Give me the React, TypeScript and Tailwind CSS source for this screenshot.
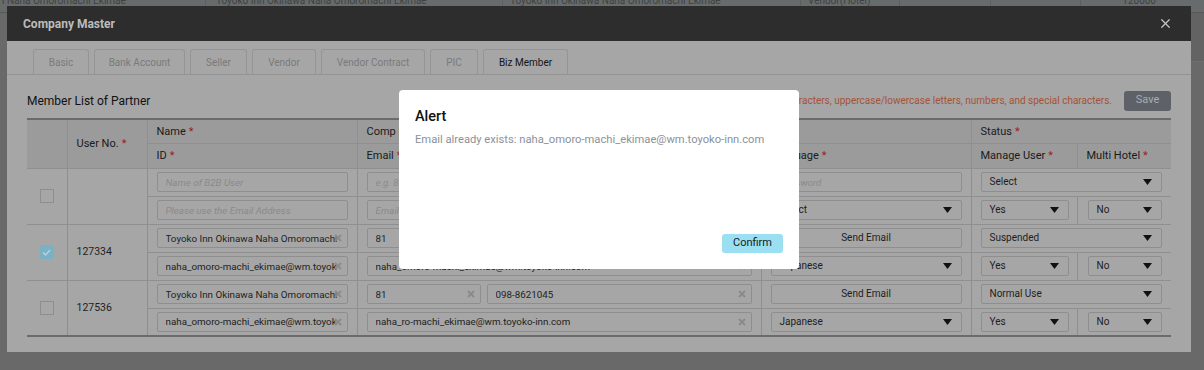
import { Fragment } from 'react';
import { X } from 'lucide-react';

const TABS = [
  { label: 'Basic', w: 'w-[56px]' },
  { label: 'Bank Account', w: 'w-[91px]' },
  { label: 'Seller', w: 'w-[57px]' },
  { label: 'Vendor', w: 'w-[64px]' },
  { label: 'Vendor Contract', w: 'w-[104px]' },
  { label: 'PIC', w: 'w-[48px]' },
  { label: 'Biz Member', w: 'w-[85px]' },
];

const Req = () => <span className="text-[#a11d1d] ml-[3px]">*</span>;

const ClearIcon = () => (
  <svg width="8" height="8" viewBox="0 0 8 8" className="absolute right-[6px] top-1/2 -translate-y-1/2">
    <path d="M1 1 L7 7 M7 1 L1 7" stroke="#8a8a8a" strokeWidth="1.8" />
  </svg>
);

const Field = ({ value, placeholder, clear, className = '' }: { value?: string; placeholder?: string; clear?: boolean; className?: string }) => (
  <div className={`relative h-[20px] ${className}`}>
    <input
      readOnly
      defaultValue={value}
      placeholder={placeholder}
      className="block w-full h-full border border-[#8e8e8e] rounded-[2px] bg-[#a6a6a6] pl-[8px] pr-[10px] text-[9.8px] leading-none text-[#1e1e1e] placeholder:italic placeholder:text-[#8a8a8a] outline-none"
    />
    {clear && <ClearIcon />}
  </div>
);

const Select = ({ value }: { value: string }) => (
  <div className="h-[20px] border border-[#8e8e8e] rounded-[2px] flex items-center justify-between pl-[8px] pr-[9px] text-[10px] leading-none text-[#1e1e1e]">
    <span>{value}</span>
    <svg width="9" height="6" viewBox="0 0 9 6">
      <path d="M0 0 H9 L4.5 6 Z" fill="#111" />
    </svg>
  </div>
);

const Check = ({ checked }: { checked?: boolean }) => (
  <div className={`w-[14px] h-[14px] mx-auto border flex items-center justify-center ${checked ? 'bg-[#7ab1c5] border-[#7ab1c5]' : 'border-[#8e8e8e]'}`}>
    {checked && (
      <svg width="9" height="7" viewBox="0 0 9 7">
        <path d="M1 3.5 L3.5 6 L8 1" stroke="#b9d3dc" strokeWidth="1.3" fill="none" />
      </svg>
    )}
  </div>
);

const SendEmail = () => (
  <div className="h-[20px] border border-[#8e8e8e] rounded-[2px] flex items-center justify-center text-[10px] leading-none text-[#1e1e1e]">
    Send Email
  </div>
);

const td = 'border border-[#8f8f8f] px-[9px] py-0 align-middle leading-none';
const th = 'border border-[#8f8f8f] px-[9px] py-0 align-middle text-left font-normal text-[11px] leading-none text-[#1a1a1a] bg-[#9b9b9b]';

const MEMBERS = [
  { no: '127334', checked: true, email: 'naha_omoro-machi_ekimae@wm.toyoko-inn.com', status: 'Suspended' },
  { no: '127536', checked: false, email: 'naha_ro-machi_ekimae@wm.toyoko-inn.com', status: 'Normal Use' },
];

export default function App() {
  return (
    <div className="relative w-[1204px] h-[370px] overflow-hidden bg-[#696969] font-[Roboto,'Noto_Sans',sans-serif]">
      {/* page behind the modals */}
      <div className="h-[13px] bg-[#676b6b] border-b border-[#585858] flex text-[10px] text-[#3e4242] leading-[10px] overflow-hidden">
        <div className="w-[206px] border-r border-[#5c6060] pl-[2px] -mt-[4px]">i Naha Omoromachi Ekimae</div>
        <div className="w-[297px] border-r border-[#5c6060] pl-[10px] -mt-[4px]">Toyoko Inn Okinawa Naha Omoromachi Ekimae</div>
        <div className="w-[298px] border-r border-[#5c6060] pl-[7px] -mt-[4px]">Toyoko Inn Okinawa Naha Omoromachi Ekimae</div>
        <div className="w-[99px] border-r border-[#5c6060] pl-[7px] -mt-[4px]">Vendor(Hotel)</div>
        <div className="w-[91px] border-r border-[#5c6060]"></div>
        <div className="w-[90px] border-r border-[#5c6060]"></div>
        <div className="flex-1 text-right pr-[48px] -mt-[4px]">120000</div>
      </div>
      <div className="ml-auto w-[13px] h-[49px] bg-[#636363] border-b border-[#6e6e6e]"></div>

      {/* Company Master modal */}
      <div className="absolute left-[7px] top-[6px] w-[1184px] h-[346px] bg-[#a6a6a6]">
        <div className="h-[35px] bg-[#2d2d2d] flex items-center justify-between pl-[16px] pr-[18px]">
          <span className="text-[12px] font-bold text-[#bcbcbc]">Company Master</span>
          <X size={15} strokeWidth={2} className="text-[#c4c4c4]" />
        </div>

        <div className="pt-[8px] pl-[26px] flex gap-[5px] border-b border-[#939393]">
          {TABS.map((t) => (
            <div
              key={t.label}
              className={`${t.w} h-[25px] flex items-center justify-center border border-b-0 border-[#959595] rounded-t-[3px] text-[10px] ${t.label === 'Biz Member' ? 'text-[#151515]' : 'text-[#7a7a7a]'}`}
            >
              {t.label}
            </div>
          ))}
        </div>

        <div className="px-[20px]">
          <div className="h-[43px] flex items-center justify-between pt-[8px]">
            <span className="text-[12px] text-[#111]">Member List of Partner</span>
            <div className="flex items-center gap-[12px]">
              <span className="text-[10px] text-[#a65238]">
                Password must be 8-20 characters long and use a combination of at least three characters, uppercase/lowercase letters, numbers, and special characters.
              </span>
              <div className="w-[47px] h-[20px] rounded-[3px] bg-[#5e6268] flex items-center justify-center text-[11px] text-[#a8abb0]">
                Save
              </div>
            </div>
          </div>

          <table className="w-[1144px] table-fixed border-collapse border-t-2 border-t-[#6b6b6b] border-b-2 border-b-[#6b6b6b]">
            <colgroup>
              <col className="w-[40px]" />
              <col className="w-[80px]" />
              <col className="w-[210px]" />
              <col className="w-[404px]" />
              <col className="w-[210px]" />
              <col className="w-[106px]" />
              <col className="w-[94px]" />
            </colgroup>
            <thead>
              <tr className="h-[24px]">
                <th rowSpan={2} className={`${th} border-l-0`}></th>
                <th rowSpan={2} className={th}>User No.<Req /></th>
                <th className={th}>Name<Req /></th>
                <th className={th}>Comp Phone<Req /></th>
                <th className={th}></th>
                <th colSpan={2} className={`${th} border-r-0`}>Status<Req /></th>
              </tr>
              <tr className="h-[25px]">
                <th className={th}>ID<Req /></th>
                <th className={th}>Email<Req /></th>
                <th className={th}>Language<Req /></th>
                <th className={th}>Manage User<Req /></th>
                <th className={`${th} border-r-0`}>Multi Hotel<Req /></th>
              </tr>
            </thead>
            <tbody>
              <tr className="h-[28px]">
                <td rowSpan={2} className={`${td} border-l-0`}><Check /></td>
                <td rowSpan={2} className={td}></td>
                <td className={td}><Field placeholder="Name of B2B User" /></td>
                <td className={td}>
                  <div className="flex gap-[6px]">
                    <Field placeholder="e.g. 81" className="w-[114px]" />
                    <Field placeholder="Phone Number" className="flex-1" />
                  </div>
                </td>
                <td className={td}><Field placeholder="Password" /></td>
                <td colSpan={2} className={`${td} border-r-0`}><Select value="Select" /></td>
              </tr>
              <tr className="h-[28px]">
                <td className={td}><Field placeholder="Please use the Email Address" /></td>
                <td className={td}><Field placeholder="Email Address" /></td>
                <td className={td}><Select value="Select" /></td>
                <td className={`${td} pr-[8px]`}><Select value="Yes" /></td>
                <td className={`${td} border-r-0 pl-[10px]`}><Select value="No" /></td>
              </tr>
              {MEMBERS.map((m) => (
                <Fragment key={m.no}>
                  <tr className="h-[28px]">
                    <td rowSpan={2} className={`${td} border-l-0`}><Check checked={m.checked} /></td>
                    <td rowSpan={2} className={`${td} text-[10.5px] text-[#1e1e1e]`}>{m.no}</td>
                    <td className={td}><Field value="Toyoko Inn Okinawa Naha Omoromachi" clear /></td>
                    <td className={td}>
                      <div className="flex gap-[6px]">
                        <Field value="81" clear className="w-[114px]" />
                        <Field value="098-8621045" clear className="flex-1" />
                      </div>
                    </td>
                    <td className={td}><SendEmail /></td>
                    <td colSpan={2} className={`${td} border-r-0`}><Select value={m.status} /></td>
                  </tr>
                  <tr className="h-[28px]">
                    <td className={td}><Field value="naha_omoro-machi_ekimae@wm.toyoko-inn.com" clear /></td>
                    <td className={td}><Field value={m.email} clear /></td>
                    <td className={td}><Select value="Japanese" /></td>
                    <td className={`${td} pr-[8px]`}><Select value="Yes" /></td>
                    <td className={`${td} border-r-0 pl-[10px]`}><Select value="No" /></td>
                  </tr>
                </Fragment>
              ))}
            </tbody>
          </table>
        </div>
      </div>

      {/* Alert dialog */}
      <div className="absolute left-[399px] top-[90px] w-[400px] h-[179px] bg-white rounded-[4px] p-[16px] flex flex-col">
        <div className="text-[14.5px] font-medium text-[#111] leading-[18px] pt-[2px]">Alert</div>
        <div className="mt-[6px] text-[11.2px] text-[#8a929b]">
          Email already exists: naha_omoro-machi_ekimae@wm.toyoko-inn.com
        </div>
        <div className="mt-auto flex justify-end">
          <div className="w-[61px] h-[19px] rounded-[3px] bg-[#9adff2] flex items-center justify-center text-[11px] text-[#1a1a1a]">
            Confirm
          </div>
        </div>
      </div>
    </div>
  );
}
